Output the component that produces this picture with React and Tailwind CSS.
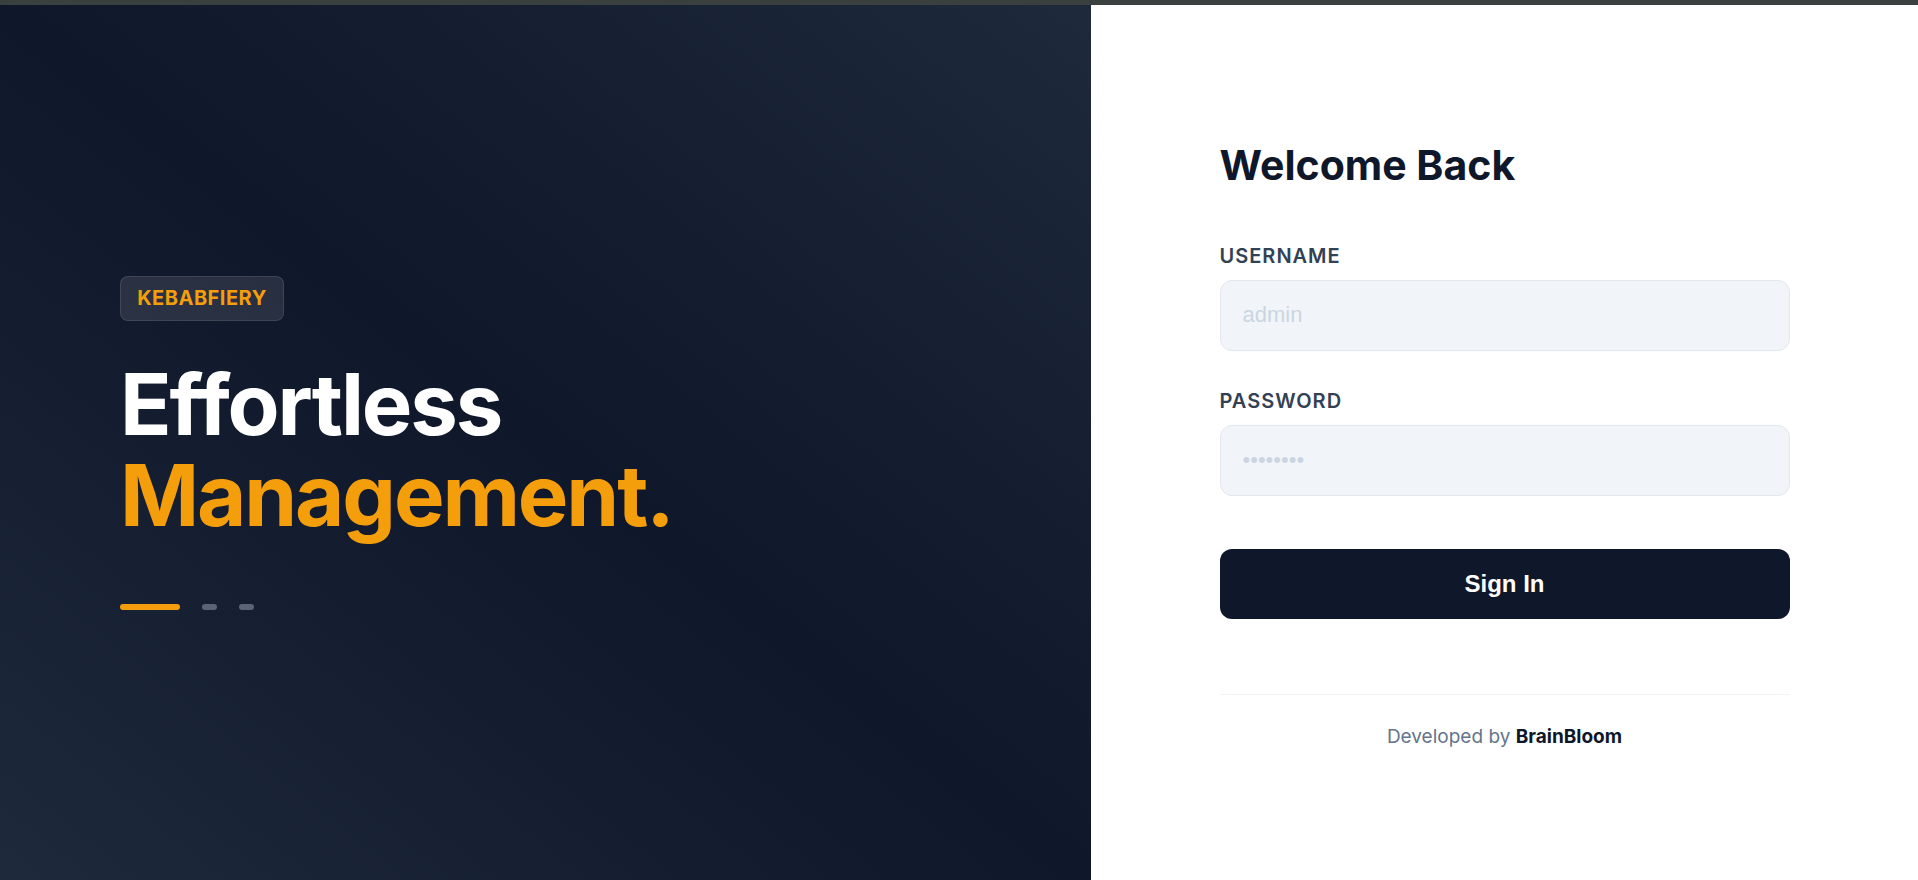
import React from "react";

const sans = { fontFamily: "Inter, 'Noto Sans', sans-serif" };
const formFont = { fontFamily: "'Liberation Sans', Arial, sans-serif" };

function Slides() {
  return (
    <div className="mt-[63px] flex items-center gap-[22px]">
      <span className="h-[6px] w-[60px] rounded-full bg-[#f59e0b]" />
      <span className="h-[6px] w-[15px] rounded-full bg-[#5b6474]" />
      <span className="h-[6px] w-[15px] rounded-full bg-[#5b6474]" />
    </div>
  );
}

function Field({ label, type, placeholder, className = "" }) {
  return (
    <div className={className}>
      <label className="block text-[20px] leading-[24px] font-semibold tracking-wider text-[#334155]">
        {label}
      </label>
      <input
        type={type}
        placeholder={placeholder}
        style={formFont}
        className="mt-[12px] block h-[71px] w-full rounded-[12px] border border-[#e2e8f0] bg-[#f1f5f9] px-[22px] text-[22px] text-[#0f172a] outline-none placeholder:text-[#cbd5e1]"
      />
    </div>
  );
}

export default function App() {
  return (
    <div className="flex h-screen w-full flex-col overflow-hidden bg-white" style={sans}>
      <div className="h-[5px] w-full shrink-0 bg-[#3a4040]" />
      <div className="flex min-h-0 flex-1">
        {/* brand panel */}
        <section className="flex w-[1091px] shrink-0 items-center bg-linear-to-tr from-[#1e293b] via-[#0f172a] to-[#1e293b] pl-[120px]">
          <div className="flex flex-col items-start">
            <span className="flex h-[45px] w-[164px] items-center justify-center rounded-lg border border-white/10 bg-white/10 text-[20px] font-bold tracking-wide text-[#f59e0b]">
              KEBABFIERY
            </span>
            <h1 className="mt-[38px] text-[85px] leading-[91px] font-bold tracking-tight">
              <span className="block text-white">Effortless</span>
              <span className="block text-[#f59e0b]">Management.</span>
            </h1>
            <Slides />
          </div>
        </section>

        {/* sign-in panel */}
        <section className="flex flex-1 items-center justify-center pt-[3px]">
          <div className="w-[570px]">
            <h2 className="text-[41px] leading-[50px] font-bold text-[#0f172a]">
              Welcome Back
            </h2>
            <form onSubmit={(e) => e.preventDefault()}>
              <Field className="mt-[54px]" label="USERNAME" type="text" placeholder="admin" />
              <Field className="mt-[38px]" label="PASSWORD" type="password" placeholder="••••••••" />
              <button
                type="submit"
                style={formFont}
                className="mt-[53px] flex h-[70px] w-full items-center justify-center rounded-[12px] bg-[#0f172a] text-[24px] font-bold text-white"
              >
                Sign In
              </button>
            </form>
            <div className="mt-[75px] border-t border-[#f1f5f9] pt-[30px] text-center text-[19px] leading-[24px] text-[#64748b]">
              Developed by <span className="font-bold text-[#0f172a]">BrainBloom</span>
            </div>
          </div>
        </section>
      </div>
    </div>
  );
}
